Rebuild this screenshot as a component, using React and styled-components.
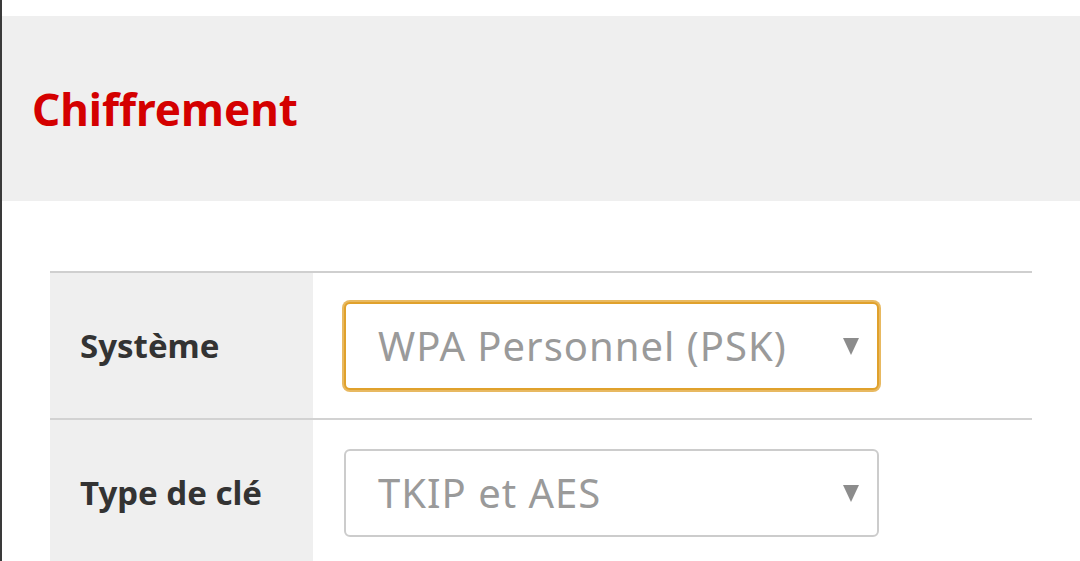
import React from 'react';
import styled, { createGlobalStyle } from 'styled-components';

const GlobalStyle = createGlobalStyle`
  html, body {
    margin: 0;
    padding: 0;
    background: #ffffff;
  }
  body {
    font-family: "Noto Sans", "Open Sans", sans-serif;
  }
`;

const Page = styled.div`
  min-height: 561px;
  border-left: 2px solid #3a3a3a;
  padding-top: 16px;
  box-sizing: border-box;
`;

const SectionHeader = styled.div`
  background: #efefef;
  height: 185px;
  display: flex;
  align-items: center;
  padding-left: 30px;
`;

const Title = styled.h2`
  margin: 0;
  color: #d40000;
  font-size: 44px;
  font-weight: 700;
`;

const Table = styled.div`
  margin: 70px 0 0 48px;
  width: 982px;
  border-top: 2px solid #cfcfcf;
`;

const Row = styled.div`
  display: grid;
  grid-template-columns: 263px 1fr;
  height: 145px;
  & + & {
    border-top: 2px solid #d2d2d2;
  }
`;

const Label = styled.div`
  background: #efefef;
  display: flex;
  align-items: center;
  padding-left: 30px;
  font-size: 33px;
  font-weight: 700;
  color: #333333;
`;

const Cell = styled.div`
  display: flex;
  align-items: center;
  padding-left: 31px;
`;

const Select = styled.div`
  box-sizing: border-box;
  width: 535px;
  height: 88px;
  display: flex;
  align-items: center;
  justify-content: space-between;
  padding: 0 18px 0 32px;
  border: 2px solid ${p => (p.$focused ? '#e0a12c' : '#cccccc')};
  border-radius: 6px;
  background: #ffffff;
  box-shadow: ${p => (p.$focused ? '0 0 0 2px rgba(224, 161, 44, 0.75)' : 'none')};
  color: #9a9a9a;
  font-size: 40px;
  letter-spacing: 1px;
  font-weight: 400;
`;

const Arrow = styled.span`
  width: 0;
  height: 0;
  border-left: 8px solid transparent;
  border-right: 8px solid transparent;
  border-top: 17px solid #8c8c8c;
  margin-top: 2px;
`;

const rows = [
  { label: 'Système', value: 'WPA Personnel (PSK)', focused: true },
  { label: 'Type de clé', value: 'TKIP et AES', focused: false },
];

export default function App() {
  return (
    <>
      <GlobalStyle />
      <Page>
        <SectionHeader>
          <Title>Chiffrement</Title>
        </SectionHeader>
        <Table>
          {rows.map(r => (
            <Row key={r.label}>
              <Label>{r.label}</Label>
              <Cell>
                <Select $focused={r.focused}>
                  <span>{r.value}</span>
                  <Arrow />
                </Select>
              </Cell>
            </Row>
          ))}
        </Table>
      </Page>
    </>
  );
}
